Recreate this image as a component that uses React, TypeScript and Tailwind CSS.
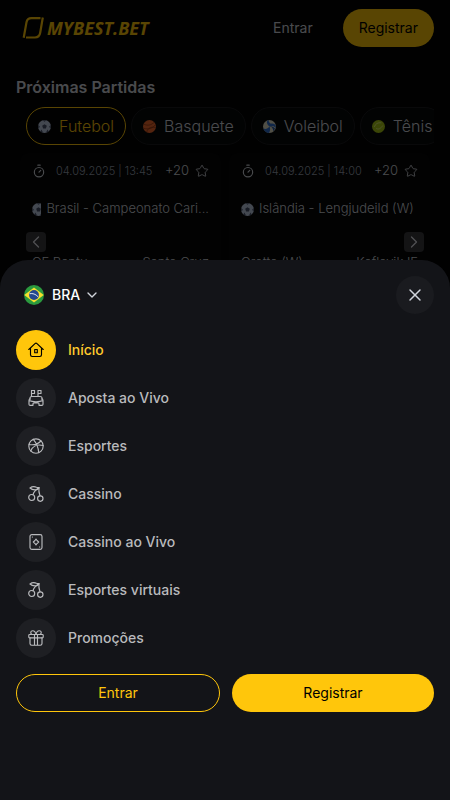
import { useState } from 'react';
import type { ReactNode } from 'react';
import { ChevronDown, ChevronLeft, ChevronRight, Star, Timer, X } from 'lucide-react';

function Logo() {
  return (
    <a href="#" className="flex items-center gap-[3px] text-[#ffc60b]">
      <svg width="22" height="22" viewBox="0 0 22 22" fill="none" stroke="currentColor" strokeWidth="2.2">
        <path d="M18.500 1.200H9.500C6.500 1.200 5 2.600 4.500 5.200L1.700 20.800" />
        <path d="M20.800 .5L18.200 15.800C17.700 18.800 16 20.500 13 20.500H4" />
      </svg>
      <span className="font-['Open_Sans',sans-serif] text-lg font-bold italic">MYBEST.BET</span>
    </a>
  );
}

function Football() {
  return (
    <svg className="shrink-0" width="13" height="13" viewBox="0 0 14 14">
      <circle cx="7" cy="7" r="7" fill="#c0cde4" />
      <path d="M7 4.500l2.500 1.800-1 2.900h-3l-1-2.900z" fill="#46506a" />
      <path d="M5 .3h4L7 2zM13.700 5l.2 4-2-1.500zM.3 5l-.2 4 2-1.500zM2.600 12.500l1-2.200 2 3.500zM11.400 12.500l-1-2.200-2 3.500z" fill="#46506a" />
    </svg>
  );
}

function Basketball() {
  return (
    <svg width="13" height="13" viewBox="0 0 14 14" fill="none" stroke="#8f3513" strokeWidth=".8">
      <circle cx="7" cy="7" r="7" fill="#f0692c" stroke="none" />
      <path d="M1 4.500c4 2 8 1 11-2M.5 9c5 1.500 10 0 13-4M4 13c1-4 4-6 9.500-5" />
    </svg>
  );
}

function Volleyball() {
  return (
    <svg width="13" height="13" viewBox="0 0 14 14">
      <circle cx="7" cy="7" r="7" fill="#e5e2c8" />
      <path d="M6 .1C3 1 4 5 7 7c2-1 4.500-1 6.800 1.300C14.500 4 10 3 8.500 4 7 3 6 2 6 .1z" fill="#2f6fd0" />
      <path d="M.2 8.500C2 10.500 5 9.500 7 7c1 2 1 4.500-.5 7C4 14 1 12 .2 8.500z" fill="#2f6fd0" />
      <path d="M7 7c2.500 0 4 2 4 5l2-2.500C12 7.500 9 6 7 7z" fill="#2558a8" />
    </svg>
  );
}

function TennisBall() {
  return (
    <svg width="13" height="13" viewBox="0 0 14 14" fill="none" stroke="#e6f08a" strokeWidth=".9">
      <circle cx="7" cy="7" r="7" fill="#a9c916" stroke="none" />
      <path d="M2.500 7.500c1-3.500 4-5 7.500-4.500M4.500 9c2 1.500 5 .5 7-3" />
    </svg>
  );
}

function BrazilFlag() {
  return (
    <svg width="20" height="20" viewBox="0 0 20 20">
      <circle cx="10" cy="10" r="10" fill="#2b9a3e" />
      <path d="M10 2.500L19.700 10 10 17.500.3 10z" fill="#f7e02e" />
      <circle cx="10" cy="10" r="4.900" fill="#23478f" />
      <path d="M5.600 8.700c3-.6 6 .3 8.500 3.100" fill="none" stroke="#dbe6ee" strokeWidth="1" />
    </svg>
  );
}

function MenuIcon({ children }: { children: ReactNode }) {
  return (
    <svg
      width="16"
      height="16"
      viewBox="0 0 16 16"
      fill="none"
      stroke="currentColor"
      strokeWidth="1.15"
      strokeLinecap="round"
      strokeLinejoin="round"
    >
      {children}
    </svg>
  );
}

const homeIcon = (
  <MenuIcon>
    <path d="M.8 7.500L7 1.600a1.500 1.500 0 0 1 2 0l6.200 5.900" />
    <path d="M2.500 6.500v6.300a1.700 1.700 0 0 0 1.700 1.700h7.600a1.700 1.700 0 0 0 1.700-1.700V6.500" />
    <path d="M6.700 7.500h2.600v3.200H6.700z" />
  </MenuIcon>
);

const stadiumIcon = (
  <MenuIcon>
    <path d="M3.500 6.500v-6h3v3h-3M10 6.500v-6h3v3h-3" />
    <path d="M2 9.500V7.800C2 6.800 3 6.500 4 6.500h8c1 0 2 .3 2 1.300v1.700" />
    <path d="M5 15.300H2.200C1.500 15.300 1 15 1 14.200V10.500c2 .9 4.500 1.200 7 1.200s5-.3 7-1.200v3.700c0 .8-.5 1.100-1.200 1.100H11v-1.500c0-.6-.4-1-1-1H6c-.6 0-1 .4-1 1zM1 10.500c0-.9.500-1.400 1-1.700M15 10.500c0-.9-.5-1.400-1-1.700" />
  </MenuIcon>
);

const ballIcon = (
  <MenuIcon>
    <circle cx="8" cy="8" r="7.200" />
    <path d="M1 6.500c4.500.8 9-.5 12-3.500M5.300 1.300c3 3.500 5 8 5.400 13.100M2.800 13c1.500-4.500 6-7 12.300-5.500" />
  </MenuIcon>
);

const cherryIcon = (
  <MenuIcon>
    <circle cx="3.700" cy="11.500" r="3" />
    <circle cx="12.300" cy="12.600" r="2.700" />
    <path d="M2 2c2-1.500 4.500-1.600 6.500-.7 1 .4 1.800.4 2.500.2-.5 1.500-1.800 2.400-3.500 2.400C5.500 4 3.500 3.500 2 2z" />
    <path d="M11 1.500C7.500 4 5.500 6 5 8.800M11 1.500c-.5 3 0 5.500 1 8.300" />
  </MenuIcon>
);

const cardIcon = (
  <MenuIcon>
    <rect x="2" y=".6" width="12" height="14.800" rx="1.800" />
    <path d="M8 5l1 1.500L10.700 8 9 9.500 8 11 7 9.500 5.300 8 7 6.500z" />
    <path d="M4.300 3h.2M11.500 13h.2" />
  </MenuIcon>
);

const giftIcon = (
  <MenuIcon>
    <rect x=".8" y="4.500" width="14.400" height="3.300" rx=".8" />
    <path d="M2 7.800v5.700c0 1 .7 1.700 1.700 1.700h8.600c1 0 1.700-.7 1.700-1.700V7.800M6.500 4.500v10.700M9.500 4.500v10.700" />
    <path d="M8 4.500C7.500 2 6.300.7 4.700.7 2.500.7 2 3.500 4 4.500M8 4.500C8.500 2 9.700.7 11.300.7c2.200 0 2.700 2.800.7 3.800" />
  </MenuIcon>
);

const menuItems = [
  { label: 'Início', icon: homeIcon },
  { label: 'Aposta ao Vivo', icon: stadiumIcon },
  { label: 'Esportes', icon: ballIcon },
  { label: 'Cassino', icon: cherryIcon },
  { label: 'Cassino ao Vivo', icon: cardIcon },
  { label: 'Esportes virtuais', icon: cherryIcon },
  { label: 'Promoções', icon: giftIcon },
];

const sports = [
  { label: 'Futebol', icon: <Football /> },
  { label: 'Basquete', icon: <Basketball /> },
  { label: 'Voleibol', icon: <Volleyball /> },
  { label: 'Tênis', icon: <TennisBall /> },
];

const matches = [
  { date: '04.09.2025 | 13:45', league: 'Brasil - Campeonato Cari...', home: 'CF Bantu', away: 'Santa Cruz' },
  { date: '04.09.2025 | 14:00', league: 'Islândia - Lengjudeild (W)', home: 'Grotta (W)', away: 'Keflavik IF' },
];

export default function App() {
  const [sport, setSport] = useState('Futebol');
  const [active, setActive] = useState('Início');
  const [menuOpen, setMenuOpen] = useState(true);

  return (
    <div className="h-screen overflow-hidden bg-[#030304] font-[Inter,'Liberation_Sans',sans-serif] text-white">
      {/* Header */}
      <header className="flex h-14 items-center justify-between pl-[22px] pr-4">
        <Logo />
        <div className="flex items-center gap-[30px] text-sm">
          <button className="text-gray-300">Entrar</button>
          <button className="h-[38px] rounded-full bg-[#ffc60b] px-4 text-black">Registrar</button>
        </div>
      </header>

      {/* Upcoming matches */}
      <main className="px-4 pt-[19px]">
        <h2 className="text-base font-semibold text-gray-300">Próximas Partidas</h2>

        <div className="mt-2 flex gap-[5px] overflow-hidden pl-[10px]">
          {sports.map((s) => (
            <button
              key={s.label}
              onClick={() => setSport(s.label)}
              className={`flex h-[38px] shrink-0 items-center gap-2 rounded-full border px-[11px] text-base font-light ${
                sport === s.label ? 'border-[#ffc60b] text-[#ffc60b]' : 'border-[#1a1b1e] bg-[#08090a] text-gray-300'
              }`}
            >
              {s.icon}
              {s.label}
            </button>
          ))}
        </div>

        <div className="relative mt-2 grid grid-cols-2 gap-2 px-1">
          {matches.map((m) => (
            <div key={m.date} className="min-w-0 rounded-lg bg-[#060607] px-3 font-light text-gray-300">
              <div className="flex h-9 items-center">
                <Timer size={14} strokeWidth={2} />
                <span className="ml-2.5 text-[11px] text-gray-400">{m.date}</span>
                <span className="ml-auto text-[13px]">+20</span>
                <Star size={14} strokeWidth={1.5} className="ml-1.5" />
              </div>
              <div className="flex h-10 items-center gap-[5px] text-[13px]">
                <span className="flex min-w-0 overflow-hidden">
                  <Football />
                </span>
                <span className="shrink-0 whitespace-nowrap">{m.league}</span>
              </div>
              <div className="flex justify-between pt-6 text-[13px]">
                <span>{m.home}</span>
                <span>{m.away}</span>
              </div>
            </div>
          ))}
          <button aria-label="Anterior" className="absolute left-[10px] top-[79px] flex size-5 items-center justify-center rounded bg-[#3a3a3d] text-gray-200">
            <ChevronLeft size={20} strokeWidth={1.5} />
          </button>
          <button aria-label="Próximo" className="absolute right-[10px] top-[79px] flex size-5 items-center justify-center rounded bg-[#3a3a3d] text-gray-200">
            <ChevronRight size={20} strokeWidth={1.5} />
          </button>
        </div>
      </main>

      {/* Bottom menu */}
      {menuOpen && (
        <>
          <div className="fixed inset-0 bg-black/65" />
          <div className="fixed inset-x-0 bottom-0 rounded-t-[28px] bg-[#131418] px-4 pb-[88px] pt-4 text-sm">
            <div className="flex items-center justify-between pl-2">
              <button className="flex items-center gap-2 font-medium">
                <BrazilFlag />
                <span>BRA</span>
                <ChevronDown size={16} className="-ml-1 text-gray-300" />
              </button>
              <button
                aria-label="Fechar"
                onClick={() => setMenuOpen(false)}
                className="flex size-[38px] items-center justify-center rounded-full bg-[#1a1b1f] text-gray-300"
              >
                <X size={20} strokeWidth={1.75} />
              </button>
            </div>

            <nav className="mt-4 flex flex-col gap-2">
              {menuItems.map((item) => (
                <a
                  key={item.label}
                  href="#"
                  onClick={() => setActive(item.label)}
                  className={`flex items-center gap-3 font-medium ${active === item.label ? 'text-[#ffcb2d]' : 'text-[#b9babd]'}`}
                >
                  <span
                    className={`flex size-10 items-center justify-center rounded-full ${
                      active === item.label ? 'bg-[#ffc60b] text-black' : 'bg-[#1e1f23]'
                    }`}
                  >
                    {item.icon}
                  </span>
                  {item.label}
                </a>
              ))}
            </nav>

            <div className="mt-4 flex gap-3">
              <button className="h-[38px] flex-1 rounded-full border border-[#ffc60b] text-[#ffc60b]">Entrar</button>
              <button className="h-[38px] flex-1 rounded-full bg-[#ffc60b] text-black">Registrar</button>
            </div>
          </div>
        </>
      )}
    </div>
  );
}
